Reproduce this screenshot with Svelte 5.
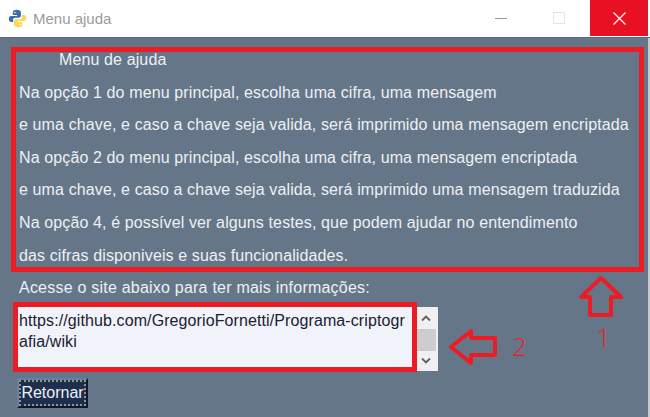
<script>
  const lines = [
    'Na opção 1 do menu principal, escolha uma cifra, uma mensagem',
    'e uma chave, e caso a chave seja valida, será imprimido uma mensagem encriptada',
    'Na opção 2 do menu principal, escolha uma cifra, uma mensagem encriptada',
    'e uma chave, e caso a chave seja valida, será imprimido uma mensagem traduzida',
    'Na opção 4, é possível ver alguns testes, que podem ajudar no entendimento',
    'das cifras disponiveis e suas funcionalidades.'
  ];
</script>

<div class="window">
  <header class="titlebar">
    <svg class="logo" width="19" height="19" viewBox="0 0 22 22">
      <path d="M10 1c-3 0-4.500 1-4.500 3v3h5v1H3.500C1.800 8 1 9.500 1 11.500S2 15 3.500 15H6v-2.500C6 11 7 10 8.500 10h4c1.500 0 2.500-1 2.500-2.500V4c0-2-2-3-5-3z" fill="#3a70a3"/>
      <path d="M12 21c3 0 4.500-1 4.500-3v-3h-5v-1h7c1.700 0 2.500-1.500 2.500-3.500S20 7 18.500 7H16v2.500c0 1.500-1 2.500-2.500 2.500h-4C8 12 7 13 7 14.500V18c0 2 2 3 5 3z" fill="#fbd955"/>
      <circle cx="8" cy="4" r="0.900" fill="#fff"/>
      <circle cx="14" cy="18" r="0.900" fill="#fff"/>
    </svg>
    <span class="title">Menu ajuda</span>
    <div class="controls">
      <div class="ctl"><span class="min"></span></div>
      <div class="ctl"><span class="max"></span></div>
      <div class="ctl close">
        <svg width="13" height="13" viewBox="0 0 13 13"><path d="M.5.500l12 12M12.500.500l-12 12" stroke="#fff" stroke-width="1.200"/></svg>
      </div>
    </div>
  </header>

  <main class="content">
    <section class="help">
      <p class="heading">Menu de ajuda</p>
      {#each lines as line}
        <p>{line}</p>
      {/each}
    </section>

    <p class="access">Acesse o site abaixo para ter mais informações:</p>

    <div class="link-row">
      <div class="linkbox">https://github.com/GregorioFornetti/Programa-criptografia/wiki</div>
      <div class="scrollbar">
        <svg width="10" height="7" viewBox="0 0 10 7"><path d="M1 5.500l4-4 4 4" fill="none" stroke="#606060" stroke-width="1.800"/></svg>
        <span class="thumb"></span>
        <svg width="10" height="7" viewBox="0 0 10 7"><path d="M1 1.500l4 4 4-4" fill="none" stroke="#606060" stroke-width="1.800"/></svg>
      </div>
    </div>

    <button class="back">Retornar</button>

    <svg class="marks" width="650" height="379" viewBox="0 38 650 379">
      <path d="M601 278l20 19h-10v18h-21v-18h-9z" fill="none" stroke="#ed1c24" stroke-width="4" stroke-linejoin="round"/>
      <path d="M451 347l20-16v7h24v17h-24v8z" fill="none" stroke="#ed1c24" stroke-width="4" stroke-linejoin="round"/>
      <text x="596" y="347" class="num">1</text>
      <text x="512" y="356" class="num">2</text>
    </svg>
  </main>
</div>

<style>
  :global(body) {
    margin: 0;
    background: #667689;
  }
  .window {
    width: 650px;
    height: 417px;
    display: flex;
    flex-direction: column;
    overflow: hidden;
    font-family: "Liberation Sans", Arial, sans-serif;
  }
  .titlebar {
    height: 38px;
    box-sizing: border-box;
    background: #fff;
    border-bottom: 1px solid #5b6a7e;
    display: flex;
    align-items: center;
    flex-shrink: 0;
  }
  .logo {
    margin: 0 6px 0 8px;
  }
  .title {
    font-size: 15px;
    color: #9a9a9a;
  }
  .controls {
    margin-left: auto;
    display: flex;
    height: 36px;
    align-self: flex-start;
    padding-right: 2px;
  }
  .ctl {
    width: 58px;
    height: 36px;
    box-sizing: border-box;
    padding-right: 4px;
    display: flex;
    align-items: center;
    justify-content: center;
  }
  .min {
    width: 12px;
    height: 1px;
    background: #999;
  }
  .max {
    width: 10px;
    height: 10px;
    border: 1px solid #e5e5e5;
  }
  .close {
    background: #e81123;
    padding-right: 0;
  }
  .content {
    position: relative;
    flex: 1;
    background: #667689;
    padding: 9px 0 0 11px;
    border-right: 2px solid #c9c9c9;
  }
  .help {
    height: 215px;
    border: 5px solid #ed1c24;
    padding-left: 3px;
    width: 620px;
  }
  .help p {
    margin: 0;
    height: 32.6px;
    line-height: 32.6px;
    font-size: 16px;
    letter-spacing: 0.12px;
    color: #eef0f4;
    white-space: nowrap;
  }
  .help .heading {
    padding-left: 40px;
    height: 24.6px;
    line-height: 16px;
  }
  .access {
    margin: 6px 0 0 8px;
    font-size: 16px;
    letter-spacing: 0.22px;
    line-height: 20px;
    color: #eef0f4;
  }
  .link-row {
    display: flex;
    margin: 4px 0 0 2px;
  }
  .linkbox {
    width: 404px;
    height: 70px;
    box-sizing: border-box;
    border: 5px solid #ed1c24;
    background: #f0f3fa;
    padding: 4px 0 0 1px;
    font-size: 16px;
    letter-spacing: 0.1px;
    line-height: 20.5px;
    color: #1c2030;
    word-break: break-all;
  }
  .scrollbar {
    width: 21px;
    height: 64px;
    margin-top: 5px;
    background: #f0f0f0;
    display: flex;
    flex-direction: column;
    align-items: flex-start;
    justify-content: space-between;
    padding: 8px 0 7px;
    box-sizing: border-box;
  }
  .scrollbar svg {
    margin-left: 4px;
  }
  .thumb {
    width: 19px;
    height: 22px;
    background: #cdcdcd;
  }
  .back {
    display: block;
    margin: 6px 0 0 6px;
    width: 71px;
    height: 30px;
    padding: 0;
    background: #1e2f4d;
    color: #eef0f4;
    font-family: inherit;
    font-size: 16px;
    border: 2px solid;
    border-color: #6f7f97 #10182a #10182a #6f7f97;
    outline: 2px dotted #8c95a3;
    outline-offset: -4px;
  }
  .marks {
    position: absolute;
    left: 0;
    top: 0;
    pointer-events: none;
  }
  .num {
    font-family: "Open Sans", sans-serif;
    font-size: 26px;
    font-weight: 300;
    fill: #ed1c24;
  }
</style>
